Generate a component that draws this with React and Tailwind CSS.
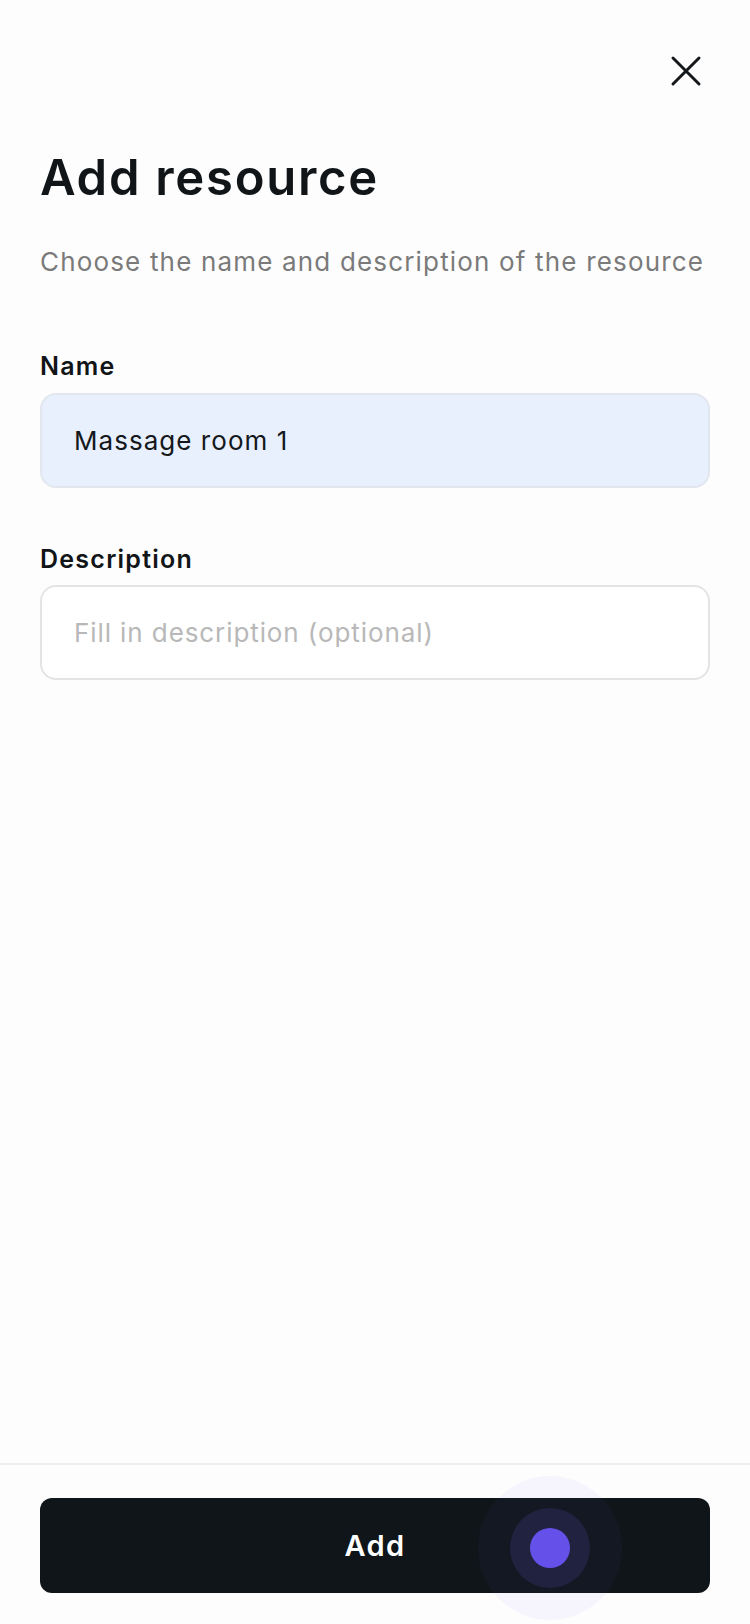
import { useState } from "react";

const CloseIcon = () => (
  <svg width="40" height="40" viewBox="0 0 40 40" fill="none">
    <path d="M7 7L33 33M33 7L7 33" stroke="#14181b" strokeWidth="3" strokeLinecap="round" />
  </svg>
);

const AddResource = () => {
  const [name, setName] = useState("Massage room 1");
  const [description, setDescription] = useState("");

  return (
    <div className="flex min-h-[1624px] w-full flex-col bg-[#fdfdfd] font-['Inter',sans-serif] text-[#111518]">
      {/* header */}
      <div className="flex justify-end pr-[44px] pt-[51px]">
        <button type="button" className="h-10 w-10">
          <CloseIcon />
        </button>
      </div>

      <div className="px-[40px]">
        <h1 className="mt-[58px] text-[49px] font-semibold leading-[57.6px] tracking-[0.035em]">
          Add resource
        </h1>
        <p className="mt-[37px] whitespace-nowrap text-[26px] leading-[36px] tracking-[0.045em] text-[#7a7a7a]">
          Choose the name and description of the resource
        </p>

        {/* name */}
        <label className="mt-[70px] block text-[25px] font-semibold leading-[32px] tracking-[0.05em]">Name</label>
        <input
          value={name}
          onChange={(e) => setName(e.target.value)}
          className="mt-[11px] h-[95px] w-full rounded-[16px] border-2 border-[#e2e6ee] bg-[#e8f0fe] px-[32px] text-[26px] tracking-[0.04em] text-[#14181b] outline-none"
        />

        {/* description */}
        <label className="mt-[55px] block text-[25px] font-semibold leading-[32px] tracking-[0.05em]">Description</label>
        <input
          value={description}
          onChange={(e) => setDescription(e.target.value)}
          placeholder="Fill in description (optional)"
          className="mt-[10px] h-[95px] w-full rounded-[16px] border-2 border-[#e4e4e4] bg-white px-[32px] text-[26px] tracking-[0.035em] text-[#14181b] outline-none placeholder:text-[#b8b8b8]"
        />
      </div>

      <div className="flex-1" />

      {/* footer */}
      <div className="border-t-2 border-[#efefef] px-[40px] pb-[31px] pt-[33px]">
        <div className="relative">
          <button
            type="button"
            className="h-[95px] w-full rounded-[12px] bg-[#0f1518] text-[29px] font-semibold tracking-[0.05em] text-white"
          >
            Add
          </button>
          {/* touch indicator */}
          <div className="pointer-events-none absolute left-[438px] top-[-22px] h-[144px] w-[144px] rounded-full bg-[rgba(120,100,255,0.05)]" />
          <div className="pointer-events-none absolute left-[470px] top-[10px] h-[80px] w-[80px] rounded-full bg-[rgba(110,90,240,0.14)]" />
          <div className="pointer-events-none absolute left-[490px] top-[30px] h-[40px] w-[40px] rounded-full bg-[#6650ea]" />
        </div>
      </div>
    </div>
  );
};

export default function App() {
  return <AddResource />;
}
